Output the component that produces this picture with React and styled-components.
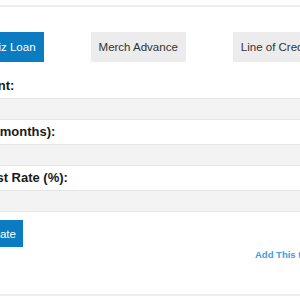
import React, { useState } from 'react';
import styled, { createGlobalStyle } from 'styled-components';

const GlobalStyle = createGlobalStyle`
  html, body {
    margin: 0;
    padding: 0;
    background: #fff;
    font-family: "Liberation Sans", Arial, Helvetica, sans-serif;
  }
`;

const Viewport = styled.div`
  width: 300px;
  height: 300px;
  overflow: hidden;
  padding-top: 5px;
  box-sizing: border-box;
`;

const Calculator = styled.div`
  width: 378px;
  margin-left: -39px;
  border-top: 2px solid #eeeeee;
  border-bottom: 2px solid #eeeeee;
  padding: 25px 0 33px;
  display: flex;
  flex-direction: column;
`;

const Tabs = styled.div`
  display: flex;
  justify-content: center;
  gap: 47px;
  margin-bottom: 12px;
`;

const Tab = styled.button`
  border: none;
  margin: 0;
  height: 30px;
  padding: 0 8px;
  font-family: inherit;
  font-size: 11.5px;
  white-space: nowrap;
  cursor: pointer;
  background: ${({ $active }) => ($active ? '#0b7cc1' : '#ececec')};
  color: ${({ $active }) => ($active ? '#ffffff' : '#333333')};
`;

const Field = styled.div`
  display: flex;
  flex-direction: column;
`;

const Label = styled.label`
  font-size: 13px;
  font-weight: bold;
  color: #1a1a1a;
  line-height: 24px;
  height: 24px;
`;

const Input = styled.input`
  box-sizing: border-box;
  width: 100%;
  height: 22px;
  margin: 0;
  padding: 0 6px;
  border: 1px solid #e6e6e6;
  background: #f3f3f3;
  font-family: inherit;
  font-size: 12px;
  outline: none;
`;

const Actions = styled.div`
  display: flex;
  margin-top: 8px;
`;

const CalcButton = styled.button`
  border: none;
  height: 27px;
  padding: 0 7px;
  background: #0b7cc1;
  color: #fff;
  font-family: inherit;
  font-size: 11.5px;
  cursor: pointer;
`;

const LinkRow = styled.div`
  display: flex;
  padding-left: 294px;
  margin-top: 2px;
`;

const AddLink = styled.a`
  font-size: 9.5px;
  font-weight: bold;
  color: #3c9be6;
  text-decoration: none;
  line-height: 12px;
  white-space: nowrap;
`;

const tabs = ['Biz Loan', 'Merch Advance', 'Line of Credit'];

export default function App() {
  const [active, setActive] = useState(0);

  return (
    <>
      <GlobalStyle />
      <Viewport>
        <Calculator>
          <Tabs>
            {tabs.map((t, i) => (
              <Tab key={t} $active={i === active} onClick={() => setActive(i)}>
                {t}
              </Tab>
            ))}
          </Tabs>
          <Field>
            <Label>Amount:</Label>
            <Input type="text" />
          </Field>
          <Field>
            <Label>Term (months):</Label>
            <Input type="text" />
          </Field>
          <Field>
            <Label>Interest Rate (%):</Label>
            <Input type="text" />
          </Field>
          <Actions>
            <CalcButton>Calculate</CalcButton>
          </Actions>
          <LinkRow>
            <AddLink href="#">Add This to Your Site</AddLink>
          </LinkRow>
        </Calculator>
      </Viewport>
    </>
  );
}
